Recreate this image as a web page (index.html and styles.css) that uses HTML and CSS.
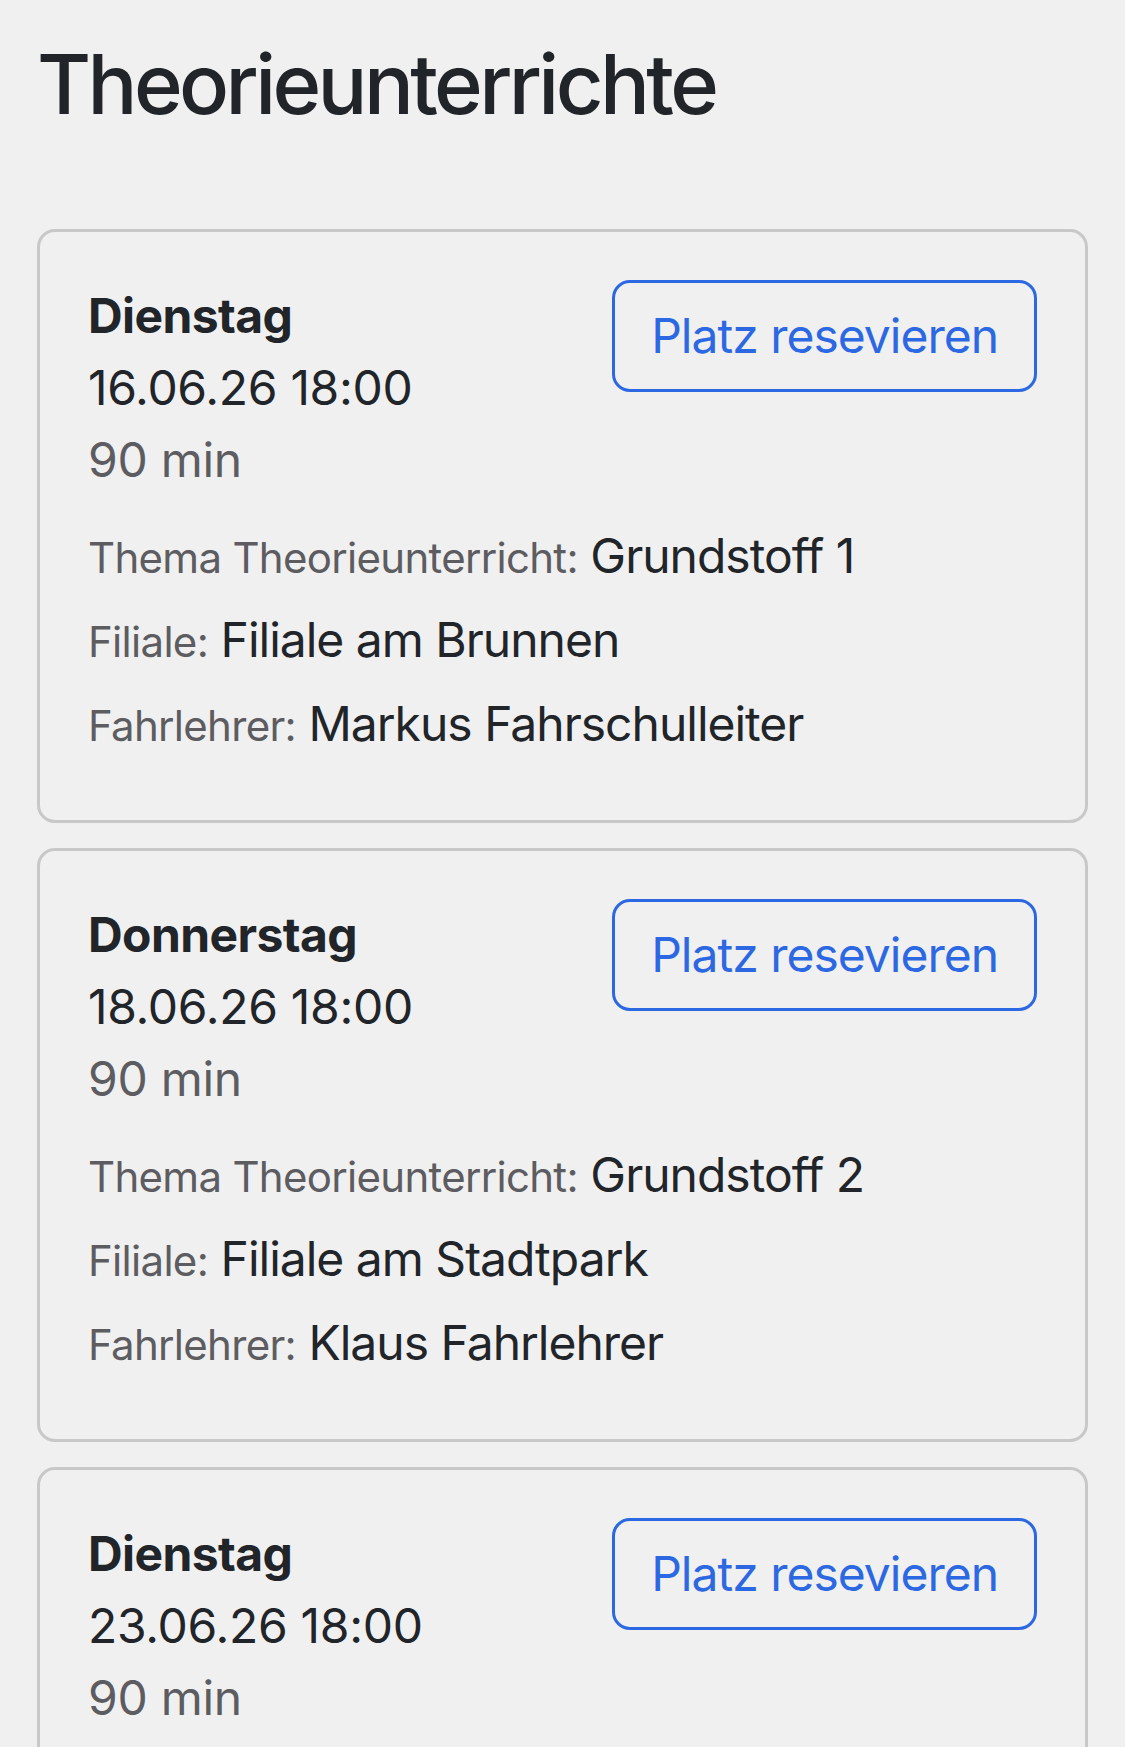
FILE: index.html
```html
<!DOCTYPE html>
<html lang="de">
<head>
    <meta charset="UTF-8">
    <meta name="viewport" content="width=device-width, initial-scale=1.0">
    <title>Theorieunterrichte</title>
    <link rel="stylesheet" href="styles.css">
</head>
<body>
    <main class="page">
        <h1>Theorieunterrichte</h1>

        <!-- Lesson list -->
        <div class="lesson-list">
            <div class="lesson-card">
                <div class="lesson-head">
                    <div class="lesson-time">
                        <div class="day">Dienstag</div>
                        <div class="date">16.06.26 18:00</div>
                        <div class="duration">90 min</div>
                    </div>
                    <button class="btn-reserve" type="button">Platz resevieren</button>
                </div>
                <div class="info"><span class="label">Thema Theorieunterricht:</span> <span class="value">Grundstoff 1</span></div>
                <div class="info"><span class="label">Filiale:</span> <span class="value">Filiale am Brunnen</span></div>
                <div class="info"><span class="label">Fahrlehrer:</span> <span class="value">Markus Fahrschulleiter</span></div>
            </div>

            <div class="lesson-card">
                <div class="lesson-head">
                    <div class="lesson-time">
                        <div class="day">Donnerstag</div>
                        <div class="date">18.06.26 18:00</div>
                        <div class="duration">90 min</div>
                    </div>
                    <button class="btn-reserve" type="button">Platz resevieren</button>
                </div>
                <div class="info"><span class="label">Thema Theorieunterricht:</span> <span class="value">Grundstoff 2</span></div>
                <div class="info"><span class="label">Filiale:</span> <span class="value">Filiale am Stadtpark</span></div>
                <div class="info"><span class="label">Fahrlehrer:</span> <span class="value">Klaus Fahrlehrer</span></div>
            </div>

            <div class="lesson-card">
                <div class="lesson-head">
                    <div class="lesson-time">
                        <div class="day">Dienstag</div>
                        <div class="date">23.06.26 18:00</div>
                        <div class="duration">90 min</div>
                    </div>
                    <button class="btn-reserve" type="button">Platz resevieren</button>
                </div>
            </div>
        </div>
    </main>
</body>
</html>
```

FILE: styles.css
```css
/* General styles */
body {
    margin: 0;
    padding: 0;
    background-color: #f0f0f0;
    font-family: Inter, "Noto Sans", sans-serif;
    color: #212529;
    overflow: hidden;
}

.page {
    padding: 35px 37px 0 37px;
}

h1 {
    margin: 0;
    font-size: 83px;
    font-weight: 500;
    line-height: 1.2;
    letter-spacing: -3.6px;
}

/* Lesson cards */
.lesson-list {
    display: flex;
    flex-direction: column;
    gap: 25px;
    margin-top: 94px;
}

.lesson-card {
    border: 3px solid #c8c8c8;
    border-radius: 18px;
    padding: 48px;
    font-size: 48px;
    line-height: 72px;
    letter-spacing: -1px;
}

.lesson-head {
    display: flex;
    justify-content: space-between;
    align-items: flex-start;
    margin-bottom: 24px;
}

.day {
    font-weight: 700;
    letter-spacing: -0.6px;
}

.date {
    letter-spacing: -0.3px;
}

.duration {
    color: #5c5c61;
    letter-spacing: -0.3px;
}

/* Reserve button */
.btn-reserve {
    font-family: inherit;
    font-size: 48px;
    line-height: 72px;
    letter-spacing: -1px;
    color: #2d68e3;
    background-color: transparent;
    border: 3px solid #2d68e3;
    border-radius: 18px;
    padding: 17px 36px;
    cursor: pointer;
}

/* Info rows */
.info {
    margin-bottom: 12px;
}

.label {
    font-size: 42px;
    line-height: 1;
    letter-spacing: -0.7px;
    color: #5c5c61;
}
```
